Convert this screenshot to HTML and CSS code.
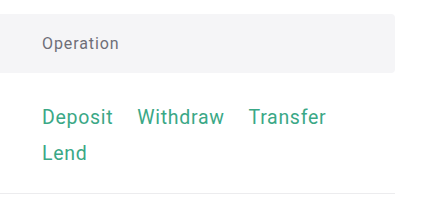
FILE: index.html
```html
<!DOCTYPE html>
<html lang="en">
<head>
    <meta charset="UTF-8">
    <title>Operation</title>
    <link rel="stylesheet" href="styles.css">
</head>
<body>
    <div class="panel">
        <div class="panel-head">Operation</div>
        <div class="ops">
            <a class="op-link" href="#">Deposit</a>
            <a class="op-link" href="#">Withdraw</a>
            <a class="op-link" href="#">Transfer</a>
            <a class="op-link" href="#">Lend</a>
        </div>
    </div>
</body>
</html>
```

FILE: styles.css
```css
* {
    margin: 0;
    padding: 0;
    box-sizing: border-box;
}

body {
    background: #fff;
    font-family: 'Roboto', 'Liberation Sans', sans-serif;
}

.panel {
    width: 395px;
    padding-top: 14px;
}

.panel-head {
    height: 59px;
    line-height: 60px;
    padding-left: 42px;
    background: #f5f5f7;
    border-radius: 0 4px 4px 0;
    color: #6e6e78;
    font-size: 16px;
    letter-spacing: 0.9px;
}

.ops {
    display: flex;
    flex-wrap: wrap;
    column-gap: 24px;
    padding: 27px 40px 21px 42px;
    border-bottom: 1px solid #ececee;
}

.op-link {
    color: #3aa886;
    font-size: 19.5px;
    line-height: 36px;
    letter-spacing: 0.7px;
    text-decoration: none;
}
```
